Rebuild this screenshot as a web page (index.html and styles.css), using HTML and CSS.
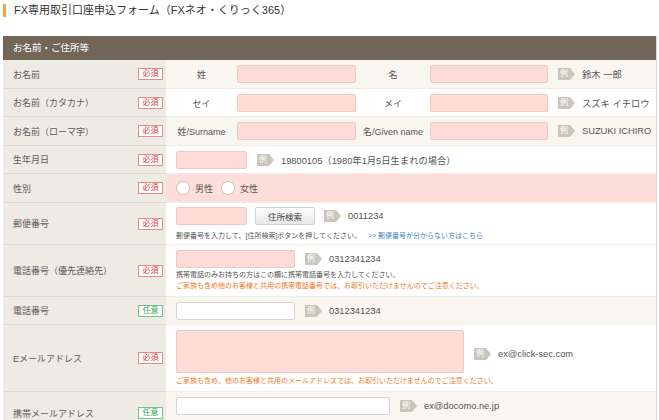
FILE: index.html
```html
<!DOCTYPE html>
<html lang="ja">
<head>
<meta charset="utf-8">
<title>FX専用取引口座申込フォーム</title>
<link rel="stylesheet" href="styles.css">
</head>
<body>
<div class="page">
  <h1 class="title">FX専用取引口座申込フォーム（FXネオ・くりっく365）</h1>
  <div class="form">
    <div class="section-head">お名前・ご住所等</div>

    <div class="row alt">
      <div class="label"><span>お名前</span><span class="badge req">必須</span></div>
      <div class="field name-field">
        <span class="sub">姓</span><input class="input w119" type="text">
        <span class="sub sub2">名</span><input class="input w118" type="text">
        <span class="ex"><span class="tag">例</span>鈴木 一郎</span>
      </div>
    </div>

    <div class="row tight">
      <div class="label"><span>お名前（カタカナ）</span><span class="badge req">必須</span></div>
      <div class="field name-field">
        <span class="sub">セイ</span><input class="input w119" type="text">
        <span class="sub sub2">メイ</span><input class="input w118" type="text">
        <span class="ex"><span class="tag">例</span>スズキ イチロウ</span>
      </div>
    </div>

    <div class="row alt">
      <div class="label"><span>お名前（ローマ字）</span><span class="badge req">必須</span></div>
      <div class="field name-field">
        <span class="sub">姓/Surname</span><input class="input w119" type="text">
        <span class="sub sub2">名/Given name</span><input class="input w118" type="text">
        <span class="ex"><span class="tag">例</span>SUZUKI ICHIRO</span>
      </div>
    </div>

    <div class="row tight">
      <div class="label"><span>生年月日</span><span class="badge req">必須</span></div>
      <div class="field">
        <input class="input w71" type="text">
        <span class="ex"><span class="tag">例</span>19800105（1980年1月5日生まれの場合）</span>
      </div>
    </div>

    <div class="row pinkrow">
      <div class="label"><span>性別</span><span class="badge req">必須</span></div>
      <div class="field radios">
        <input class="radio" type="radio" name="sex"><span class="rlabel">男性</span>
        <input class="radio" type="radio" name="sex"><span class="rlabel">女性</span>
      </div>
    </div>

    <div class="row">
      <div class="label"><span>郵便番号</span><span class="badge req">必須</span></div>
      <div class="field stack postal">
        <div class="line">
          <input class="input w71" type="text">
          <button class="btn" type="button">住所検索</button>
          <span class="ex ex9"><span class="tag">例</span>0011234</span>
        </div>
        <p class="note note-gap6">郵便番号を入力して、[住所検索]ボタンを押してください。<a class="link" href="#">&gt;&gt; 郵便番号が分からない方はこちら</a></p>
      </div>
    </div>

    <div class="row">
      <div class="label"><span>電話番号（優先連絡先）</span><span class="badge req">必須</span></div>
      <div class="field stack phone">
        <div class="line">
          <input class="input w119" type="text">
          <span class="ex"><span class="tag">例</span>0312341234</span>
        </div>
        <p class="note tall">携帯電話のみお持ちの方はこの欄に携帯電話番号を入力してください。</p>
        <p class="note tall orange">ご家族も含め他のお客様と共用の携帯電話番号では、お取引いただけませんのでご注意ください。</p>
      </div>
    </div>

    <div class="row alt tight">
      <div class="label"><span>電話番号</span><span class="badge opt">任意</span></div>
      <div class="field">
        <input class="input white w119" type="text">
        <span class="ex"><span class="tag">例</span>0312341234</span>
      </div>
    </div>

    <div class="row">
      <div class="label"><span>Eメールアドレス</span><span class="badge req">必須</span></div>
      <div class="field stack email">
        <div class="line">
          <input class="input w288 big" type="text">
          <span class="ex ex-low"><span class="tag">例</span>ex@click-sec.com</span>
        </div>
        <p class="note orange note-gap3">ご家族も含め、他のお客様と共用のメールアドレスでは、お取引いただけませんのでご注意ください。</p>
      </div>
    </div>

    <div class="row alt last">
      <div class="label"><span>携帯メールアドレス</span><span class="badge opt">任意</span></div>
      <div class="field stack">
        <div class="line">
          <input class="input white w214" type="text">
          <span class="ex"><span class="tag">例</span>ex@docomo.ne.jp</span>
        </div>
      </div>
    </div>
  </div>
</div>
</body>
</html>
```

FILE: styles.css
```css
* {
  box-sizing: border-box;
}

body {
  margin: 0;
  background: #fff;
  color: #555;
  font-family: "Liberation Sans", "Noto Sans CJK JP", sans-serif;
}

.page {
  width: 657px;
  padding-left: 3px;
}

.title {
  margin: 0;
  height: 36px;
  padding-top: 3px;
  display: flex;
  align-items: flex-start;
  font-size: 11px;
  line-height: 15px;
  font-weight: normal;
  color: #333;
}

.title::before {
  content: "";
  flex: none;
  width: 3px;
  height: 13px;
  margin-top: 1px;
  margin-right: 8px;
  background: #f3a43a;
}

.form {
  border-right: 1px solid #ddd7cf;
}

.section-head {
  height: 24px;
  line-height: 24px;
  padding-left: 10px;
  background: #726659;
  color: #fff;
  font-size: 9.5px;
}

.row {
  display: grid;
  grid-template-columns: 163px 1fr;
}

.label {
  display: flex;
  align-items: center;
  justify-content: space-between;
  padding: 0 3px 0 10px;
  background: #eeeae4;
  border-bottom: 1px solid #ddd7cf;
  font-size: 9px;
  color: #5c5c5c;
}

.badge {
  width: 25px;
  height: 12px;
  line-height: 10px;
  text-align: center;
  font-size: 8px;
  background: #fff;
}

.badge.req {
  border: 1px solid #e88a86;
  color: #d9413c;
}

.badge.opt {
  border: 1px solid #6ec68c;
  color: #37a85a;
}

.field {
  display: flex;
  align-items: center;
  padding: 5px 0 5px 10px;
  border-bottom: 1px solid #efebe5;
  background: #fff;
  font-size: 9px;
  color: #555;
}

.tight .field {
  padding-bottom: 4px;
}

.alt .field {
  background: #f9f6f0;
}

.pinkrow .field {
  background: #fddedb;
  padding: 7px 0 7px 10px;
}

.name-field {
  padding-left: 0;
}

.sub {
  width: 71px;
  text-align: center;
  white-space: nowrap;
}

.sub2 {
  width: 74px;
}

.input {
  display: block;
  flex: none;
  height: 18px;
  margin: 0;
  padding: 0;
  border: 1px solid #f1c9c4;
  border-radius: 2px;
  background: #fddcd8;
  appearance: none;
}

.input.white {
  background: #fff;
  border-color: #d9d4cd;
}

.input.big {
  height: 43px;
}

.w71 { width: 71px; }
.w118 { width: 118px; }
.w119 { width: 119px; }
.w214 { width: 214px; }
.w288 { width: 288px; }

.ex {
  display: flex;
  align-items: center;
  margin-left: 10px;
  font-size: 9.3px;
  color: #555;
  white-space: nowrap;
}

.ex9 {
  margin-left: 9px;
}

.ex-low {
  margin-top: 5px;
}

.tag {
  flex: none;
  width: 17px;
  height: 12px;
  margin-right: 7px;
  padding-left: 2px;
  background: #c9c6bb;
  color: #fff;
  font-size: 8px;
  line-height: 12px;
  clip-path: polygon(0 0, 12px 0, 17px 50%, 12px 100%, 0 100%);
}

.radios {
  gap: 0;
}

.radio {
  appearance: none;
  flex: none;
  width: 14px;
  height: 14px;
  margin: 0;
  border: 1px solid #cbc5be;
  border-radius: 50%;
  background: #fff;
}

.rlabel {
  margin: 0 8px 0 5px;
}

.btn {
  flex: none;
  width: 60px;
  height: 18px;
  margin: 0 0 0 8px;
  padding: 0;
  border: 1px solid #d0d0d0;
  border-radius: 2px;
  background: linear-gradient(#fdfdfd, #e8e8e8);
  color: #444;
  font-family: inherit;
  font-size: 8.5px;
}

.stack {
  flex-direction: column;
  align-items: flex-start;
  justify-content: flex-start;
}

.line {
  display: flex;
  align-items: center;
}

.postal {
  padding: 4px 0 3px 10px;
}

.phone {
  padding: 5px 0 5px 10px;
}

.email {
  padding: 5px 0 5px 10px;
}

.last .field {
  min-height: 43px;
}

.note {
  margin: 0;
  font-size: 7px;
  line-height: 10px;
  color: #555;
  white-space: nowrap;
}

.note.tall {
  line-height: 11px;
}

.phone .line {
  margin-bottom: 1px;
}

.note-gap6 {
  margin-top: 6px;
}

.note-gap3 {
  margin-top: 3px;
}

.orange {
  color: #ee7a1c;
}

.link {
  margin-left: 7px;
  color: #3f86b8;
  text-decoration: none;
}
```
